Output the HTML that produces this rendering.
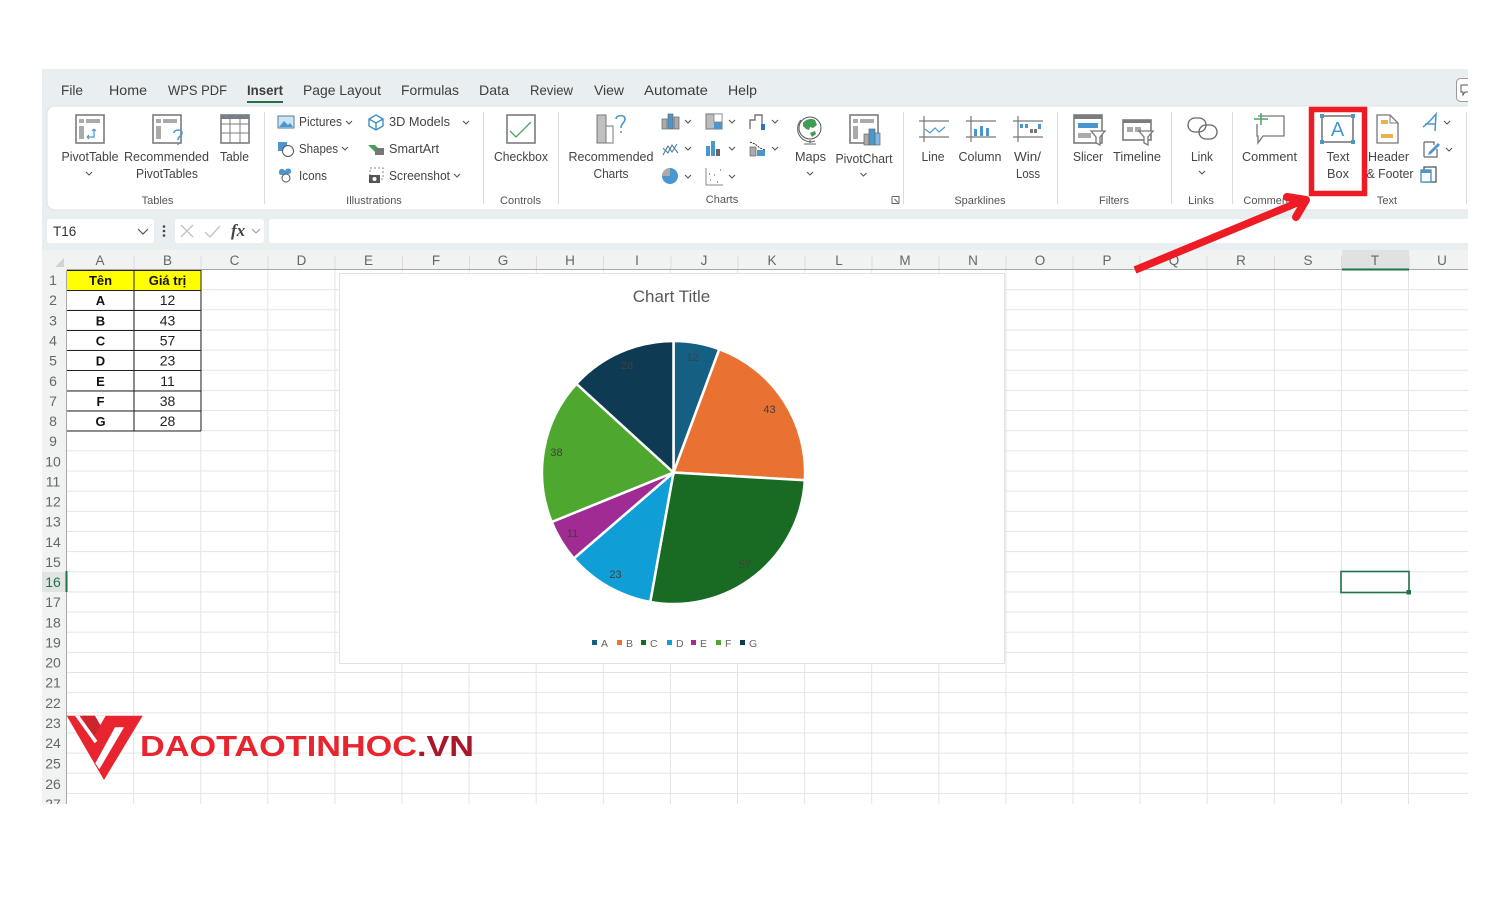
<!DOCTYPE html>
<html><head><meta charset="utf-8"><style>
html,body{margin:0;padding:0;background:#fff;width:1500px;height:900px;overflow:hidden}
svg{display:block}
text{font-family:"Liberation Sans","Noto Sans CJK JP",sans-serif;fill:#444}
.tab{font-size:14px;fill:#3d3d3d}
.rb{font-size:12.5px;text-anchor:middle;fill:#444}
.rl{font-size:12.5px;fill:#444}
.gp{font-size:11px;text-anchor:middle;fill:#555}
.ch{font-size:13.5px;text-anchor:middle;fill:#666}
.rn{font-size:14px;text-anchor:middle;fill:#666}
.cb{font-size:13px;text-anchor:middle;fill:#111;font-weight:bold}
.cv{font-size:14px;text-anchor:middle;fill:#222}
.lab{font-size:11px;text-anchor:middle;fill:#404040}
.lg{font-size:10.5px;fill:#666}
.g{fill:none;stroke:#7c7c7c;stroke-width:1.6}
.b{fill:none;stroke:#4a97d0;stroke-width:1.6}
</style></head><body>
<svg width="1500" height="900" viewBox="0 0 1500 900" xmlns="http://www.w3.org/2000/svg">
<defs>
<clipPath id="app"><rect x="42" y="69" width="1426" height="735"/></clipPath>
<pattern id="grid" patternUnits="userSpaceOnUse" x="67" y="270" width="67.1" height="20.15">
<rect x="0" y="19.15" width="67.1" height="1" fill="#e4e4e4"/>
<rect x="66.1" y="0" width="1" height="20.15" fill="#e4e4e4"/>
</pattern>
<path id="c" d="M0 0l3 3 3-3" fill="none" stroke="#555" stroke-width="1.1"/>
</defs>
<g clip-path="url(#app)">
<rect x="42" y="69" width="1426" height="181" fill="#e9eef0"/>
<rect x="42" y="250" width="1426" height="20" fill="#f1f2f2"/>
<rect x="42" y="270" width="25" height="534" fill="#f1f2f2"/>
<rect x="67" y="270" width="1401" height="534" fill="#fff"/>
<rect x="67" y="270" width="1401" height="534" fill="url(#grid)"/>

<!-- ribbon -->
<rect x="47" y="106" width="1440" height="104" rx="8" fill="#fff" stroke="#dfe3e4"/>
<g stroke="#d9dcdd">
<line x1="264.500" y1="112" x2="264.500" y2="204"/><line x1="483.500" y1="112" x2="483.500" y2="204"/><line x1="558.500" y1="112" x2="558.500" y2="204"/><line x1="903.500" y1="112" x2="903.500" y2="204"/><line x1="1057.500" y1="112" x2="1057.500" y2="204"/><line x1="1171.500" y1="112" x2="1171.500" y2="204"/><line x1="1232.500" y1="112" x2="1232.500" y2="204"/><line x1="1466.500" y1="112" x2="1466.500" y2="204"/>
</g>

<!-- tabs -->
<text class="tab" x="61" y="95" textLength="22" lengthAdjust="spacingAndGlyphs">File</text>
<text class="tab" x="109" y="95" textLength="38" lengthAdjust="spacingAndGlyphs">Home</text>
<text class="tab" x="168" y="95" textLength="59" lengthAdjust="spacingAndGlyphs">WPS PDF</text>
<text class="tab" x="247" y="95" textLength="36" lengthAdjust="spacingAndGlyphs" style="font-weight:bold">Insert</text>
<rect x="247" y="101" width="36" height="2" fill="#217346"/>
<text class="tab" x="303" y="95" textLength="78" lengthAdjust="spacingAndGlyphs">Page Layout</text>
<text class="tab" x="401" y="95" textLength="58" lengthAdjust="spacingAndGlyphs">Formulas</text>
<text class="tab" x="479" y="95" textLength="30" lengthAdjust="spacingAndGlyphs">Data</text>
<text class="tab" x="530" y="95" textLength="43" lengthAdjust="spacingAndGlyphs">Review</text>
<text class="tab" x="594" y="95" textLength="30" lengthAdjust="spacingAndGlyphs">View</text>
<text class="tab" x="644" y="95" textLength="64" lengthAdjust="spacingAndGlyphs">Automate</text>
<text class="tab" x="728" y="95" textLength="29" lengthAdjust="spacingAndGlyphs">Help</text>
<rect x="1456.500" y="78.500" width="30" height="23" rx="4" fill="#fff" stroke="#9a9a9a"/>
<path d="M1461 85h8v7h-4l-2 3v-3h-2z" fill="none" stroke="#555"/>

<!-- Tables -->
<rect x="76" y="115" width="28" height="28" class="g" fill="#fff"/>
<rect x="79" y="119" width="5" height="4" fill="#aaa"/><rect x="86" y="119" width="14" height="4" fill="#aaa"/><rect x="79" y="126" width="5" height="13" fill="#aaa"/>
<path d="M90 137h-3m0 0l2-2m-2 2l2 2M87 137h7v-8m0 0l-2 2m2-2l2 2" class="b" style="stroke-width:1.2"/>
<rect x="153" y="115" width="28" height="28" class="g"/>
<rect x="156" y="119" width="5" height="4" fill="#aaa"/><rect x="163" y="119" width="14" height="4" fill="#aaa"/><rect x="156" y="126" width="5" height="13" fill="#aaa"/>
<path d="M174 133c0-4 8-4 8 0 0 3-4 3-4 7" class="b"/><circle cx="178" cy="144" r="1" fill="#4a97d0"/>
<rect x="221" y="115" width="28" height="28" class="g"/>
<rect x="221" y="115" width="28" height="4" fill="#7c7c7c"/>
<path d="M221 124h28M221 133h28M230 115v28M240 115v28" class="g" style="stroke-width:1"/>
<path d="M224 116l2 2 2-2zM233 116l2 2 2-2zM243 116l2 2 2-2z" fill="#4a97d0"/>
<text class="rb" x="90" y="161" textLength="57" lengthAdjust="spacingAndGlyphs">PivotTable</text>
<use href="#c" x="86" y="172"/>
<text class="rb" x="166.500" y="161" textLength="85" lengthAdjust="spacingAndGlyphs">Recommended</text>
<text class="rb" x="167" y="178" textLength="62" lengthAdjust="spacingAndGlyphs">PivotTables</text>
<text class="rb" x="234.500" y="161" textLength="29" lengthAdjust="spacingAndGlyphs">Table</text>
<text class="gp" x="157.500" y="204">Tables</text>

<!-- Illustrations -->
<rect x="278" y="116" width="16" height="12" fill="#cfe4f3" stroke="#4a7ea8"/><path d="M279 127l5-6 4 4 2-2 3 4z" fill="#4a97d0"/>
<text class="rl" x="299" y="126" textLength="43" lengthAdjust="spacingAndGlyphs">Pictures</text><use href="#c" x="346" y="121"/>
<rect x="278" y="142" width="9" height="9" fill="#4a97d0"/><circle cx="288" cy="151" r="5.500" fill="#fff" stroke="#555"/>
<text class="rl" x="299" y="153" textLength="39" lengthAdjust="spacingAndGlyphs">Shapes</text><use href="#c" x="342" y="147"/>
<path d="M279 172c0-4 5-4 6-1 1-4 7-3 6 1-1 3-5 2-6 3h-4c-2 0-2-2-2-3z" fill="#4a97d0"/><circle cx="286" cy="178" r="4" fill="#fff" stroke="#555"/>
<text class="rl" x="299" y="180" textLength="28" lengthAdjust="spacingAndGlyphs">Icons</text>
<path d="M376 115l7 4v7l-7 4-7-4v-7zM369 119l7 4 7-4M376 123v7" fill="none" stroke="#3f8ec4" stroke-width="1.4"/>
<text class="rl" x="389" y="126" textLength="61" lengthAdjust="spacingAndGlyphs">3D Models</text><use href="#c" x="463" y="121"/>
<path d="M368 145h7l3 3h6l-2 4h-7l-3-3z" fill="#4a9e5c"/><rect x="375" y="148" width="9" height="7" fill="#777"/>
<text class="rl" x="389" y="153" textLength="50" lengthAdjust="spacingAndGlyphs">SmartArt</text>
<rect x="370" y="168" width="13" height="11" fill="none" stroke="#888" stroke-dasharray="2 2"/><rect x="369" y="175" width="11" height="8" fill="#555"/><circle cx="374.500" cy="179" r="2" fill="#fff"/>
<text class="rl" x="389" y="180" textLength="61" lengthAdjust="spacingAndGlyphs">Screenshot</text><use href="#c" x="454" y="174"/>
<text class="gp" x="374" y="204">Illustrations</text>

<!-- Controls -->
<rect x="507" y="115" width="28" height="28" class="g"/><path d="M510 131l6 6 15-15" fill="none" stroke="#4aa564" stroke-width="1.3"/>
<text class="rb" x="521" y="161" textLength="54" lengthAdjust="spacingAndGlyphs">Checkbox</text>
<text class="gp" x="520.500" y="204">Controls</text>

<!-- Charts -->
<rect x="597" y="115" width="9" height="28" fill="#c0c0c0" stroke="#777"/><rect x="606" y="126" width="7" height="17" fill="#fff" stroke="#777"/>
<path d="M616 119c0-4 9-5 9 0 0 4-4 4-4 9" class="b"/><circle cx="621" cy="132" r="1" fill="#4a97d0"/>
<text class="rb" x="611" y="161" textLength="85" lengthAdjust="spacingAndGlyphs">Recommended</text>
<text class="rb" x="611" y="178" textLength="35" lengthAdjust="spacingAndGlyphs">Charts</text>
<rect x="662" y="119" width="5" height="10" fill="#aaa" stroke="#666" stroke-width=".7"/><rect x="668" y="114" width="5" height="15" fill="#4a97d0" stroke="#666" stroke-width=".7"/><rect x="674" y="117" width="5" height="12" fill="#aaa" stroke="#666" stroke-width=".7"/><use href="#c" x="685" y="120"/>
<path d="M663 155l5-9 4 6 5-8M663 148l5 5 4-8 6 8" fill="none" stroke="#4a7ea8" stroke-width="1.1"/><use href="#c" x="685" y="147"/>
<circle cx="670" cy="176" r="8" fill="#4a97d0"/><path d="M670 176v-8a8 8 0 0 0-8 8z" fill="#aaa"/><use href="#c" x="685" y="175"/>
<rect x="706" y="114" width="16" height="15" fill="#bbb" stroke="#777"/><rect x="714" y="122" width="8" height="7" fill="#4a97d0"/><rect x="714" y="114" width="8" height="8" fill="#fff" stroke="#777" stroke-width=".7"/><use href="#c" x="729" y="120"/>
<rect x="706" y="146" width="4" height="10" fill="#4a97d0"/><rect x="711" y="141" width="4" height="15" fill="#4a97d0"/><rect x="716" y="149" width="4" height="7" fill="#666"/><use href="#c" x="729" y="147"/>
<path d="M706 168v17h17" fill="none" stroke="#888"/><path d="M710 180h1M714 175h1M717 182h1M720 170h1M709 174h1" stroke="#4a97d0" stroke-width="1.5"/><use href="#c" x="729" y="175"/>
<path d="M750 129v-9h5v-5h7v10" fill="none" stroke="#777" stroke-width="1.4"/><rect x="761" y="124" width="4" height="6" fill="#2a77b4"/><use href="#c" x="772" y="120"/>
<rect x="750" y="147" width="6" height="9" fill="#aaa" stroke="#666" stroke-width=".7"/><rect x="757" y="150" width="8" height="6" fill="#4a97d0"/><path d="M750 142l5 2 5 4 5 2" fill="none" stroke="#333" stroke-dasharray="2 1"/><use href="#c" x="772" y="147"/>
<circle cx="810" cy="128" r="11" fill="#fff" stroke="#555"/><path d="M803 123c3-4 8-5 12-3l2 5-4 3-3-1-1 3-3-1-3-3zM810 133l5-2 1 3-4 3z" fill="#3f9c55"/>
<path d="M801 120a13 13 0 0 0 14 21M810 143v-3M804 144h12" fill="none" stroke="#666" stroke-width="1.1"/>
<text class="rb" x="810.500" y="161" textLength="31" lengthAdjust="spacingAndGlyphs">Maps</text><use href="#c" x="807" y="172"/>
<rect x="850" y="115" width="28" height="28" class="g"/><rect x="853" y="119" width="5" height="4" fill="#aaa"/><rect x="860" y="119" width="14" height="4" fill="#aaa"/><rect x="853" y="126" width="5" height="13" fill="#aaa"/>
<rect x="864" y="134" width="5" height="11" fill="#aaa" stroke="#666" stroke-width=".7"/><rect x="869" y="129" width="6" height="16" fill="#4a97d0" stroke="#666" stroke-width=".7"/><rect x="875" y="133" width="5" height="12" fill="#7fb8e0" stroke="#666" stroke-width=".7"/>
<text class="rb" x="864" y="163" textLength="57" lengthAdjust="spacingAndGlyphs">PivotChart</text><use href="#c" x="860.500" y="173"/>
<text class="gp" x="722" y="203">Charts</text>
<path d="M892 196.500h7v7M892 196.500v7h7M894.500 199l3.500 3.500" fill="none" stroke="#666"/>

<!-- Sparklines -->
<path d="M919 121h30M919 137h30M924 116v26" fill="none" stroke="#777" stroke-width="1.2"/><path d="M925 129l5 4 5-5 4 4 6-5" fill="none" stroke="#4a97d0" stroke-width="1.2"/>
<text class="rb" x="933" y="161" textLength="23" lengthAdjust="spacingAndGlyphs">Line</text>
<path d="M966 121h30M966 137h30M971 116v26" fill="none" stroke="#777" stroke-width="1.2"/><path d="M974 129h3v7h-3zM980 126h3v10h-3zM986 128h3v8h-3z" fill="#4a97d0"/>
<text class="rb" x="980" y="161" textLength="43" lengthAdjust="spacingAndGlyphs">Column</text>
<path d="M1013 121h30M1013 137h30M1018 116v26" fill="none" stroke="#777" stroke-width="1.2"/><path d="M1020 124h3v4h-3zM1025 124h3v4h-3zM1038 124h3v5h-3z" fill="#4a97d0"/><path d="M1030 129h3v4h-3zM1034 129h3v4h-3z" fill="#777"/>
<text class="rb" x="1027.500" y="161" textLength="27" lengthAdjust="spacingAndGlyphs">Win/</text>
<text class="rb" x="1028" y="178" textLength="24" lengthAdjust="spacingAndGlyphs">Loss</text>
<text class="gp" x="980" y="204">Sparklines</text>

<!-- Filters -->
<rect x="1074" y="115" width="28" height="28" class="g"/><rect x="1074" y="115" width="28" height="4" fill="#7c7c7c"/><rect x="1078" y="123" width="20" height="5" fill="#4a97d0"/><rect x="1078" y="133" width="13" height="5" fill="#aaa"/>
<path d="M1091 131h14l-5 6v8l-4-2v-6z" fill="#fff" stroke="#777" stroke-width="1.3"/>
<text class="rb" x="1088" y="161" textLength="30" lengthAdjust="spacingAndGlyphs">Slicer</text>
<rect x="1123" y="120" width="28" height="20" class="g"/><rect x="1123" y="120" width="28" height="3" fill="#7c7c7c"/><rect x="1127" y="127" width="6" height="5" fill="#aaa"/><rect x="1135" y="127" width="6" height="5" fill="#aaa"/>
<path d="M1139 131h14l-5 6v8l-4-2v-6z" fill="#fff" stroke="#777" stroke-width="1.3"/>
<text class="rb" x="1137" y="161" textLength="48" lengthAdjust="spacingAndGlyphs">Timeline</text>
<text class="gp" x="1114" y="204">Filters</text>

<!-- Links -->
<rect x="1188" y="118" width="18" height="14" rx="7" fill="none" stroke="#666" stroke-width="1.3"/><rect x="1199" y="125" width="18" height="14" rx="7" fill="none" stroke="#666" stroke-width="1.3"/>
<text class="rb" x="1202" y="161" textLength="22" lengthAdjust="spacingAndGlyphs">Link</text><use href="#c" x="1199" y="171"/>
<text class="gp" x="1201" y="204">Links</text>

<!-- Comments -->
<path d="M1258 116h26v20h-21l-5 7v-7h-1v-12" fill="none" stroke="#777" stroke-width="1.3"/>
<path d="M1261 113v12M1254 119h14" stroke="#4aa564" stroke-width="1.5"/>
<text class="rb" x="1269.500" y="161" textLength="55" lengthAdjust="spacingAndGlyphs">Comment</text>
<text class="gp" x="1270" y="204">Comments</text>

<!-- Text -->
<rect x="1322" y="116" width="31" height="26" fill="none" stroke="#666" stroke-width="1.4"/>
<rect x="1320" y="114" width="4" height="4" fill="#4a97d0"/><rect x="1351" y="114" width="4" height="4" fill="#4a97d0"/><rect x="1320" y="140" width="4" height="4" fill="#4a97d0"/><rect x="1351" y="140" width="4" height="4" fill="#4a97d0"/>
<text x="1337.500" y="136" style="font-size:20px;text-anchor:middle;fill:#4a97d0">A</text>
<text class="rb" x="1338" y="161" textLength="23" lengthAdjust="spacingAndGlyphs">Text</text>
<text class="rb" x="1338" y="178" textLength="22" lengthAdjust="spacingAndGlyphs">Box</text>
<path d="M1377 115h13l8 8v20h-21z" fill="#fff" stroke="#777" stroke-width="1.3"/><path d="M1390 115v8h8" fill="none" stroke="#777"/>
<rect x="1381" y="120" width="7" height="4" fill="#eab04a"/><rect x="1381" y="134" width="12" height="4" fill="#eab04a"/>
<text class="rb" x="1388.500" y="161" textLength="41" lengthAdjust="spacingAndGlyphs">Header</text>
<text class="rb" x="1390" y="178" textLength="47" lengthAdjust="spacingAndGlyphs">&amp; Footer</text>
<path d="M1423 127c4-3 9-8 13-13l-1 17M1425 124h11" fill="none" stroke="#4a97d0" stroke-width="1.5"/><use href="#c" x="1444" y="121"/>
<path d="M1424 142h10v3M1424 157v-15M1424 157h13v-8" fill="none" stroke="#666" stroke-width="1.2"/><path d="M1429 152l9-9 2 2-9 9-3 1z" fill="#4a97d0"/><use href="#c" x="1446" y="148"/>
<rect x="1424" y="167" width="12" height="15" fill="none" stroke="#555" stroke-width="1.3"/><rect x="1421" y="170" width="10" height="12" fill="#fff" stroke="#3f8ec4" stroke-width="1.3"/><rect x="1421" y="170" width="10" height="3" fill="#4a97d0"/>
<text class="gp" x="1387" y="204">Text</text>

<!-- formula bar -->
<rect x="47" y="219" width="107" height="24" rx="3" fill="#fff"/>
<text x="53" y="236" style="font-size:13.500px;fill:#333">T16</text>
<path d="M138 229l5 5 5-5" fill="none" stroke="#555" stroke-width="1.2"/>
<circle cx="164" cy="226.500" r="1.300" fill="#444"/><circle cx="164" cy="231" r="1.300" fill="#444"/><circle cx="164" cy="235.500" r="1.300" fill="#444"/>
<rect x="175" y="219" width="89" height="24" rx="3" fill="#fff"/>
<path d="M181 225l12 12M193 225l-12 12" stroke="#c4c4c4" stroke-width="1.4"/>
<path d="M205 232l5 5 10-11" fill="none" stroke="#c4c4c4" stroke-width="1.4"/>
<text x="231" y="236" style="font-family:'Liberation Serif',serif;font-size:17px;font-style:italic;font-weight:bold;fill:#444">fx</text>
<path d="M252 229l4 4 4-4" fill="none" stroke="#999"/>
<rect x="269" y="219" width="1210" height="24" rx="3" fill="#fff"/>

<!-- col headers -->
<path d="M64 267v-9l-9 9z" fill="#d3d3d3"/>
<rect x="1342" y="250" width="67" height="19" fill="#e0e2e2"/>
<path d="M134 256v14M201 256v14M268 256v14M335 256v14M402.500 256v14M469.500 256v14M536.500 256v14M603.500 256v14M671 256v14M738 256v14M805 256v14M872 256v14M939 256v14M1006 256v14M1073 256v14M1140 256v14M1207 256v14M1274.500 256v14M1341.500 256v14M1409 256v14" stroke="#dcdcdc"/>
<rect x="67" y="269" width="1401" height="1" fill="#a9a9a9"/>
<rect x="1342" y="268.500" width="67" height="2" fill="#217346"/>
<text class="ch" x="100" y="265">A</text><text class="ch" x="167.500" y="265">B</text><text class="ch" x="234.500" y="265">C</text><text class="ch" x="301.500" y="265">D</text><text class="ch" x="368.500" y="265">E</text><text class="ch" x="436" y="265">F</text><text class="ch" x="503" y="265">G</text><text class="ch" x="570" y="265">H</text><text class="ch" x="637" y="265">I</text><text class="ch" x="704" y="265">J</text><text class="ch" x="772" y="265">K</text><text class="ch" x="839" y="265">L</text><text class="ch" x="905" y="265">M</text><text class="ch" x="973" y="265">N</text><text class="ch" x="1040" y="265">O</text><text class="ch" x="1107" y="265">P</text><text class="ch" x="1174" y="265">Q</text><text class="ch" x="1241" y="265">R</text><text class="ch" x="1308" y="265">S</text><text class="ch" x="1375" y="265">T</text><text class="ch" x="1442" y="265">U</text>

<!-- row headers -->
<rect x="42" y="572" width="24" height="20" fill="#e2e4e4"/>
<rect x="66" y="270" width="1" height="534" fill="#a9a9a9"/>
<rect x="65.500" y="571" width="2" height="21" fill="#217346"/>
<text class="rn" x="53" y="285">1</text><text class="rn" x="53" y="305">2</text><text class="rn" x="53" y="325.500">3</text><text class="rn" x="53" y="345.500">4</text><text class="rn" x="53" y="365.500">5</text><text class="rn" x="53" y="386">6</text><text class="rn" x="53" y="406">7</text><text class="rn" x="53" y="426">8</text><text class="rn" x="53" y="446">9</text><text class="rn" x="53" y="466.500">10</text><text class="rn" x="53" y="486.500">11</text><text class="rn" x="53" y="506.500">12</text><text class="rn" x="53" y="526.500">13</text><text class="rn" x="53" y="547">14</text><text class="rn" x="53" y="567">15</text><text class="rn" x="53" y="587" style="fill:#217346">16</text><text class="rn" x="53" y="607">17</text><text class="rn" x="53" y="627.500">18</text><text class="rn" x="53" y="647.500">19</text><text class="rn" x="53" y="667.500">20</text><text class="rn" x="53" y="687.500">21</text><text class="rn" x="53" y="708">22</text><text class="rn" x="53" y="728">23</text><text class="rn" x="53" y="748">24</text><text class="rn" x="53" y="768.500">25</text><text class="rn" x="53" y="789">26</text><text class="rn" x="53" y="809">27</text>

<!-- table -->
<rect x="67" y="270" width="134" height="20" fill="#ffff00"/>
<path d="M67 270.500h134M67 290.500h134M67 310.500h134M67 330.500h134M67 350.500h134M67 370.500h134M67 391h134M67 411h134M67 431h134M134 270v161M201 270v161" stroke="#222" stroke-width="1" fill="none"/>
<text class="cb" x="100.500" y="285">Tên</text><text class="cb" x="167.500" y="285">Giá trị</text>
<text class="cb" x="100.500" y="305">A</text><text class="cv" x="167.500" y="305">12</text>
<text class="cb" x="100.500" y="325.500">B</text><text class="cv" x="167.500" y="325.500">43</text>
<text class="cb" x="100.500" y="345.500">C</text><text class="cv" x="167.500" y="345.500">57</text>
<text class="cb" x="100.500" y="365.500">D</text><text class="cv" x="167.500" y="365.500">23</text>
<text class="cb" x="100.500" y="386">E</text><text class="cv" x="167.500" y="386">11</text>
<text class="cb" x="100.500" y="406">F</text><text class="cv" x="167.500" y="406">38</text>
<text class="cb" x="100.500" y="426">G</text><text class="cv" x="167.500" y="426">28</text>

<!-- selection -->
<rect x="1341" y="571.500" width="68" height="21" fill="none" stroke="#217346" stroke-width="1.6"/>
<rect x="1406.500" y="590" width="4.500" height="4.500" fill="#217346"/>

<!-- chart -->
<rect x="339.500" y="273.500" width="665" height="390" fill="#fff" stroke="#e2e2e2"/>
<text x="671.500" y="302" style="font-size:17px;text-anchor:middle;fill:#595959">Chart Title</text>
<g stroke="#fff" stroke-width="2.500" transform="translate(673.5 472.5) scale(1.012) translate(-673.5 -472.5)">
<path d="M673.500 472.500L673.500 342.500A130 130 0 0 1 718.800 350.600Z" fill="#156082"/>
<path d="M673.500 472.500L718.800 350.600A130 130 0 0 1 803.300 480.200Z" fill="#e97132"/>
<path d="M673.500 472.500L803.300 480.200A130 130 0 0 1 650.500 600.400Z" fill="#196b24"/>
<path d="M673.500 472.500L650.500 600.400A130 130 0 0 1 575 557.400Z" fill="#0f9ed5"/>
<path d="M673.500 472.500L575 557.400A130 130 0 0 1 553.100 521.400Z" fill="#a02b93"/>
<path d="M673.500 472.500L553.100 521.400A130 130 0 0 1 577.600 384.800Z" fill="#4ea72e"/>
<path d="M673.500 472.500L577.600 384.800A130 130 0 0 1 673.500 342.500Z" fill="#0e3a53"/>
</g>
<text class="lab" x="692.500" y="361">12</text><text class="lab" x="769.500" y="413">43</text><text class="lab" x="745" y="568">57</text><text class="lab" x="615.500" y="578">23</text><text class="lab" x="572.500" y="537">11</text><text class="lab" x="556.500" y="456">38</text><text class="lab" x="627" y="369">28</text>
<rect x="592" y="640" width="5" height="5" fill="#156082"/><text class="lg" x="601" y="647">A</text>
<rect x="617" y="640" width="5" height="5" fill="#e97132"/><text class="lg" x="626" y="647">B</text>
<rect x="641" y="640" width="5" height="5" fill="#196b24"/><text class="lg" x="650" y="647">C</text>
<rect x="667" y="640" width="5" height="5" fill="#0f9ed5"/><text class="lg" x="676" y="647">D</text>
<rect x="691" y="640" width="5" height="5" fill="#a02b93"/><text class="lg" x="700" y="647">E</text>
<rect x="716" y="640" width="5" height="5" fill="#4ea72e"/><text class="lg" x="725" y="647">F</text>
<rect x="740" y="640" width="5" height="5" fill="#0e3a53"/><text class="lg" x="749" y="647">G</text>

<!-- logo -->
<path d="M66.700 715.700H142.700L104 780Z" fill="#e8252f"/>
<path d="M82 715.700H95L100.300 725L93 738Z" fill="#c9252f"/>
<path d="M95 715.700H105.700L100.300 725Z" fill="#fff"/>
<path d="M75 715.700H79.300L97.300 740.700L94.700 743.300Z" fill="#fff"/>
<path d="M115 727.300H124L99.300 769.300L95.300 763.300Z" fill="#fff"/>
<text x="140" y="756" textLength="277" lengthAdjust="spacingAndGlyphs" style="font-size:29px;font-weight:bold;fill:#e8252f">DAOTAOTINHOC</text>
<text x="417" y="756" textLength="57" lengthAdjust="spacingAndGlyphs" style="font-size:29px;font-weight:bold;fill:#a8182a">.VN</text>
</g>

<!-- red highlights -->
<rect x="1311.500" y="109.500" width="53" height="84" fill="none" stroke="#ed1c24" stroke-width="5.500"/>
<path d="M1135 270L1304 200" stroke="#ed1c24" stroke-width="7.500" fill="none"/>
<path d="M1287 197L1306 200L1296 217" stroke="#ed1c24" stroke-width="8" fill="none" stroke-linecap="round" stroke-linejoin="round"/>
</svg>
</body></html>
